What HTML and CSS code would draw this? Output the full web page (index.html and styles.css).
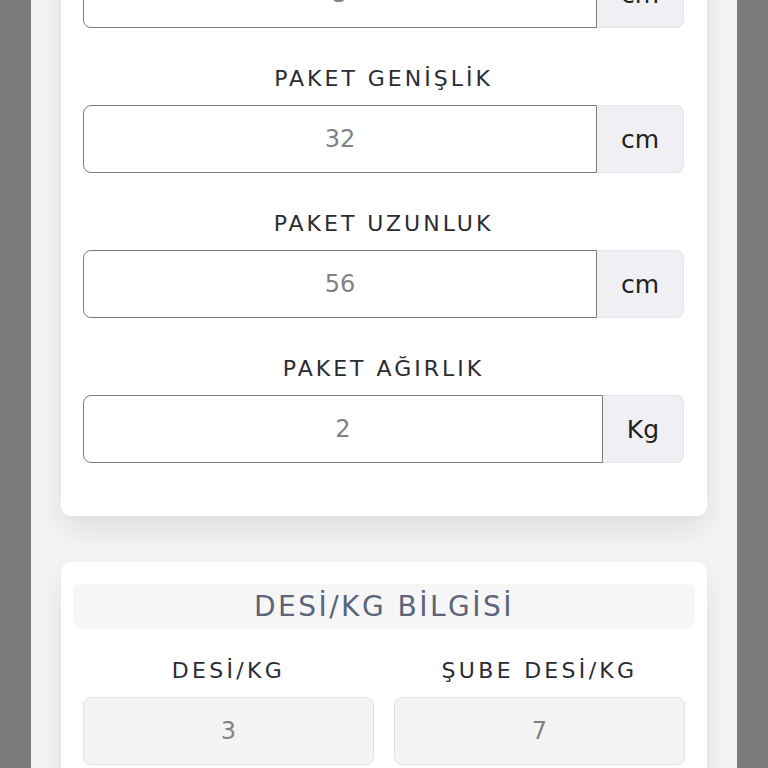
FILE: index.html
```html
<!DOCTYPE html>
<html lang="tr">
<head>
  <meta charset="UTF-8">
  <meta name="viewport" content="width=device-width, initial-scale=1.0">
  <title>Desi Hesaplama</title>
  <link rel="stylesheet" href="styles.css">
</head>
<body>
  <div class="panel">
    <div class="card">
      <div class="field">
        <label>PAKET YÜKSEKLİK</label>
        <div class="input-group">
          <input type="text" value="5">
          <span class="addon">cm</span>
        </div>
      </div>
      <div class="field">
        <label>PAKET GENİŞLİK</label>
        <div class="input-group">
          <input type="text" value="32">
          <span class="addon">cm</span>
        </div>
      </div>
      <div class="field">
        <label>PAKET UZUNLUK</label>
        <div class="input-group">
          <input type="text" value="56">
          <span class="addon">cm</span>
        </div>
      </div>
      <div class="field">
        <label>PAKET AĞIRLIK</label>
        <div class="input-group">
          <input type="text" value="2">
          <span class="addon">Kg</span>
        </div>
      </div>
    </div>

    <div class="card card-info">
      <div class="card-title">DESİ/KG BİLGİSİ</div>
      <div class="info-row">
        <div class="field">
          <label>DESİ/KG</label>
          <input type="text" value="3" disabled>
        </div>
        <div class="field">
          <label>ŞUBE DESİ/KG</label>
          <input type="text" value="7" disabled>
        </div>
      </div>
    </div>
  </div>
</body>
</html>
```

FILE: styles.css
```css
html, body {
  margin: 0;
  padding: 0;
}
body {
  font-family: 'DejaVu Sans', sans-serif;
  background-color: #7b7b7b;
  overflow: hidden;
}
.panel {
  margin: -103px 31px 0;
  min-height: 1000px;
  background-color: #f4f4f4;
  padding: 0 30px;
}
.card {
  background-color: white;
  border-radius: 10px;
  box-shadow: 0 14px 30px rgba(0,0,0,0.09);
  padding: 22px 23px 53px 22px;
}
.field {
  margin-top: 36px;
  text-align: center;
}
.field:first-child {
  margin-top: 0;
}
label {
  display: block;
  font-size: 22px;
  line-height: 30px;
  letter-spacing: 3px;
  color: #2b2b35;
  margin-bottom: 11px;
}
.input-group {
  display: flex;
  height: 68px;
}
input {
  flex: 1;
  min-width: 0;
  height: 68px;
  box-sizing: border-box;
  border: 1px solid #7d7d7d;
  border-radius: 8px 0 0 8px;
  font-family: inherit;
  font-size: 24px;
  color: #828282;
  text-align: center;
  background: white;
  padding: 0 10px;
}
.addon {
  display: flex;
  align-items: center;
  padding: 0 24px;
  background-color: #efeff4;
  border: 1px solid #e4e4ea;
  border-left: none;
  border-radius: 0 8px 8px 0;
  font-size: 25px;
  color: #222;
}
.card-info {
  margin-top: 46px;
  padding: 22px 12px 30px;
}
.card-title {
  background-color: #f6f6f7;
  border-radius: 8px;
  height: 45px;
  line-height: 45px;
  text-align: center;
  font-size: 28px;
  letter-spacing: 2.5px;
  color: #5c6579;
}
.info-row {
  display: flex;
  gap: 20px;
  padding: 0 10px;
  margin-top: 27px;
}
.info-row .field {
  flex: 1;
  margin-top: 0;
}
.info-row label {
  letter-spacing: 3.3px;
}
.info-row input {
  width: 100%;
  border: 1px solid #e2e2e2;
  border-radius: 8px;
  background-color: #f4f4f4;
}
```
